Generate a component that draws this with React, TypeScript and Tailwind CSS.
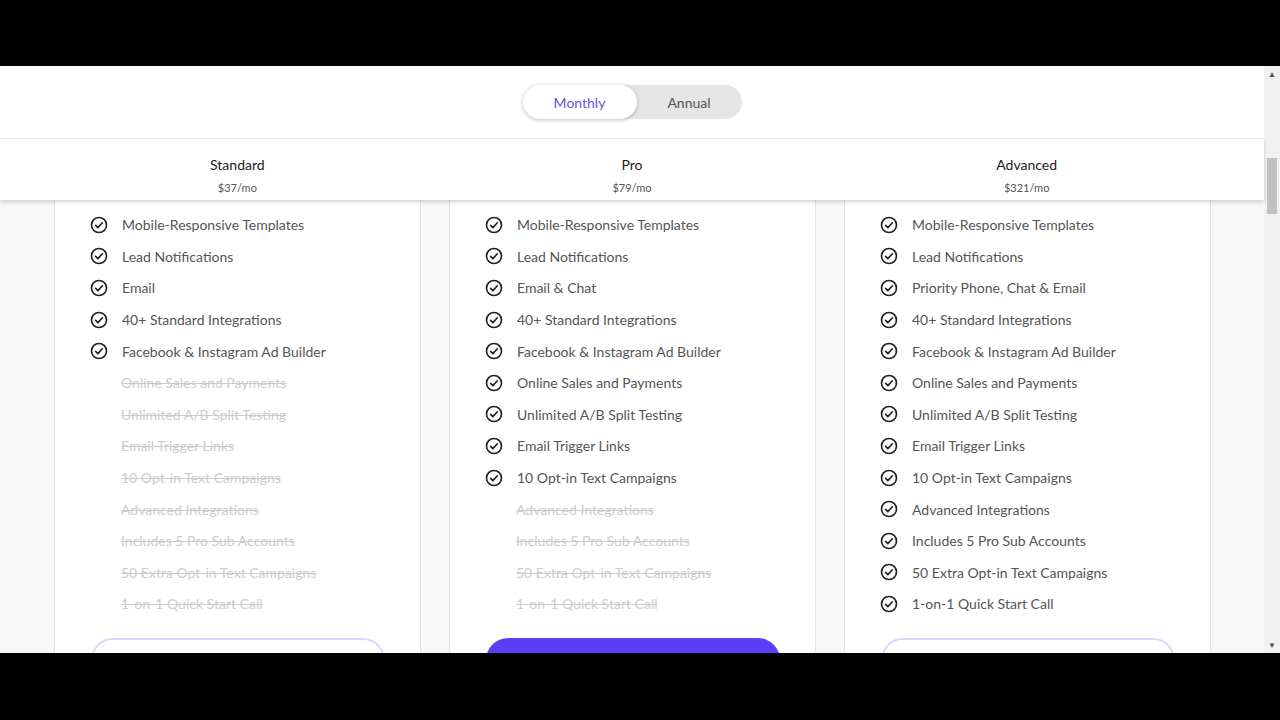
import React from "react";

const features = [
  "Mobile-Responsive Templates",
  "Lead Notifications",
  "Email",
  "40+ Standard Integrations",
  "Facebook & Instagram Ad Builder",
  "Online Sales and Payments",
  "Unlimited A/B Split Testing",
  "Email Trigger Links",
  "10 Opt-in Text Campaigns",
  "Advanced Integrations",
  "Includes 5 Pro Sub Accounts",
  "50 Extra Opt-in Text Campaigns",
  "1-on-1 Quick Start Call",
];

const plans = [
  { name: "Standard", price: "$37/mo", included: 5, support: "Email", solid: false },
  { name: "Pro", price: "$79/mo", included: 9, support: "Email & Chat", solid: true },
  { name: "Advanced", price: "$321/mo", included: 13, support: "Priority Phone, Chat & Email", solid: false },
];

const Check = () => (
  <svg width="18" height="18" viewBox="0 0 24 24" fill="none" stroke="#222" strokeWidth="2.2" strokeLinecap="round" strokeLinejoin="round">
    <circle cx="12" cy="12" r="10" />
    <path d="M7.5 12.5l3 3 6-6.5" />
  </svg>
);

export default function App() {
  return (
    <div className="h-screen flex flex-col bg-black" style={{ fontFamily: "Lato, 'Open Sans', sans-serif" }}>
      <div className="h-[66px]" />
      <div className="flex-1 flex min-h-0 bg-white overflow-hidden">
        <div className="flex-1 flex flex-col min-w-0">
          <div className="h-[73px] flex items-center justify-center border-b border-[#ececec]">
            <div className="flex bg-[#e6e6e6] rounded-full w-[219px] h-[34px] text-[14px]">
              <div className="w-[114px] bg-white rounded-full shadow-[0_1px_4px_rgba(0,0,0,0.25)] flex items-center justify-center text-[#6a4fe0]">Monthly</div>
              <div className="flex-1 flex items-center justify-center text-[#555]">Annual</div>
            </div>
          </div>
          <div className="h-[61px] grid grid-cols-3 gap-[28px] px-[54px] shadow-[0_2px_4px_rgba(0,0,0,0.18)] relative z-10 bg-white">
            {plans.map((p) => (
              <div key={p.name} className="flex flex-col items-center pt-[15px]">
                <div className="text-[14px] text-[#222]">{p.name}</div>
                <div className="text-[11px] text-[#555] mt-[5px]">{p.price}</div>
              </div>
            ))}
          </div>
          <div className="flex-1 bg-[#f8f8f8] grid grid-cols-3 gap-[28px] pl-[54px] pr-[53px] min-h-0">
            {plans.map((p) => (
              <div key={p.name} className="bg-white border-x border-[#e4e4e4] pt-[9px] pl-[35px] pr-[30px] flex flex-col">
                {features.map((f, i) => {
                  const label = i === 2 ? p.support : f;
                  const on = i < p.included;
                  return (
                    <div key={f} className="h-[31.6px] flex items-center gap-[14px] text-[14px]">
                      {on ? (
                        <>
                          <Check />
                          <span className="text-[#555]">{label}</span>
                        </>
                      ) : (
                        <span className="ml-[31px] text-[#ccc] line-through">{label}</span>
                      )}
                    </div>
                  );
                })}
                <div className="mt-[18px] flex justify-center pr-[5px]">
                  {p.solid ? (
                    <div className="w-[294px] h-[44px] rounded-[22px] bg-[#5b3ff6]" />
                  ) : (
                    <div className="w-[294px] h-[44px] rounded-[22px] border-2 border-[#ddd5fb]" />
                  )}
                </div>
              </div>
            ))}
          </div>
        </div>
        <div className="w-[16px] bg-[#f1f1f1] flex flex-col items-center">
          <div className="text-[8px] text-[#505050] h-[16px] leading-[16px]">▲</div>
          <div className="w-[10px] h-[56px] bg-[#c1c1c1] mt-[76px]" />
          <div className="flex-1" />
          <div className="text-[8px] text-[#505050] h-[16px] leading-[16px]">▼</div>
        </div>
      </div>
      <div className="h-[67px]" />
    </div>
  );
}
